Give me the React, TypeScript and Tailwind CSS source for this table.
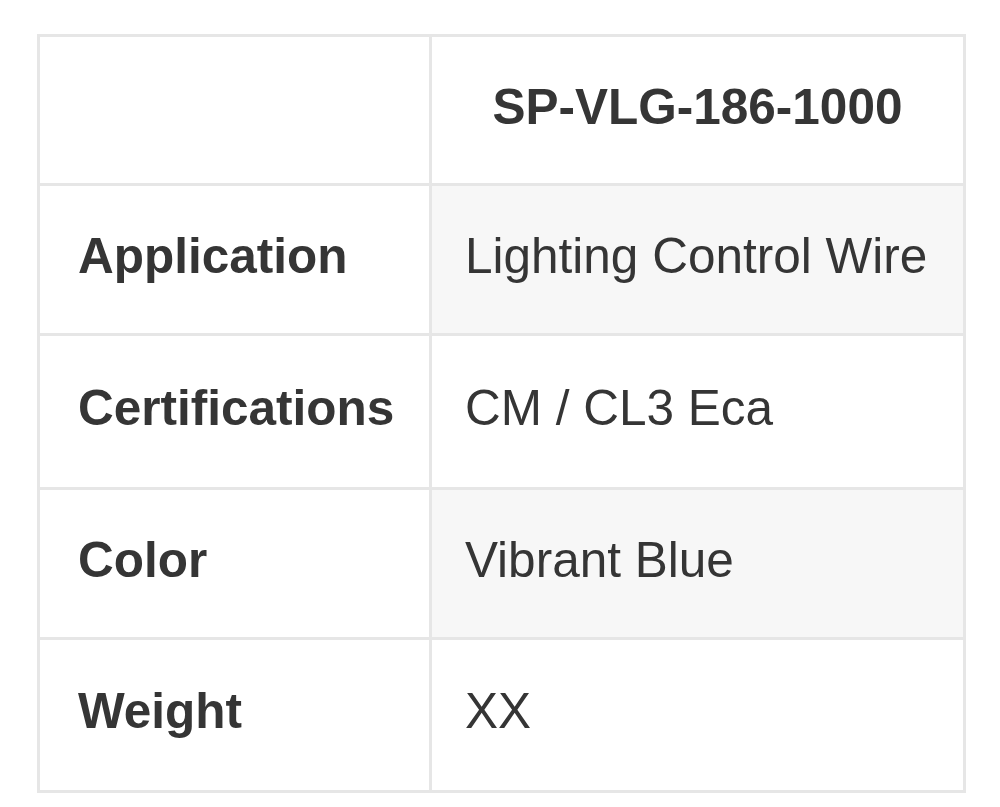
import React from "react";

const rows: [string, string][] = [
  ["Application", "Lighting Control Wire"],
  ["Certifications", "CM / CL3 Eca"],
  ["Color", "Vibrant Blue"],
  ["Weight", "XX"],
];

export default function App() {
  return (
    <div className="w-[1000px] h-[807px] bg-white pt-[34px] pl-[37px] font-['Liberation_Sans',Arial,sans-serif] text-[#353535] text-[49.5px] leading-none">
      <div className="w-[929px] grid grid-cols-[389px_531px] grid-rows-[146px_147px_151px_147px_150px] gap-[3px] p-[3px] bg-[#e6e6e6]">
        <div className="bg-white" />
        <div className="bg-white flex items-center justify-center pb-[7px] font-bold">SP-VLG-186-1000</div>
        {rows.map(([k, v], i) => (
          <React.Fragment key={k}>
            <div className="bg-white flex items-center pl-[38px] pb-[8px] font-bold">{k}</div>
            <div className={`${i % 2 === 0 ? "bg-[#f7f7f7]" : "bg-white"} flex items-center pl-[33px] pb-[8px]`}>{v}</div>
          </React.Fragment>
        ))}
      </div>
    </div>
  );
}
